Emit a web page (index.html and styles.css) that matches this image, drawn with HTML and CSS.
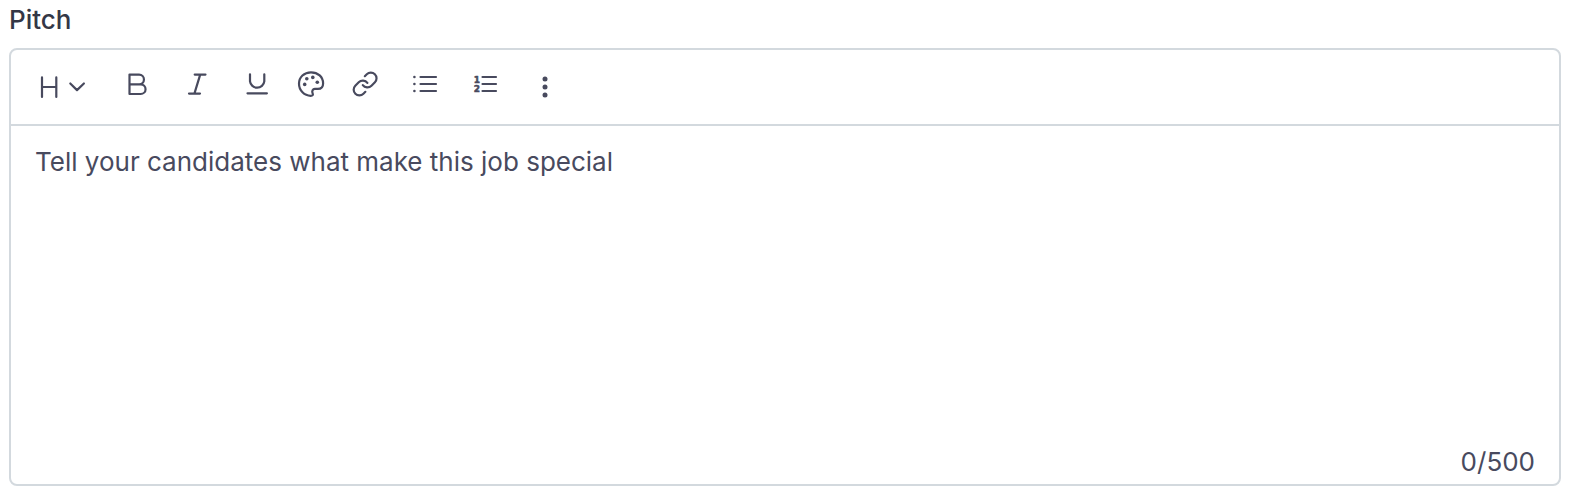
FILE: index.html
```html
<!DOCTYPE html>
<html lang="en">
<head>
<meta charset="utf-8">
<title>Pitch</title>
<link rel="stylesheet" href="styles.css">
</head>
<body>
<main class="field">
  <div class="label">Pitch</div>
  <section class="editor">
    <div class="toolbar">
      <svg class="icon heading" viewBox="0 0 54 32" role="img" aria-label="Heading"><path d="M5 6.400v19.600M19.300 6.400v19.600M5 16H19.300M33.300 12.500l6.700 6.600 6.900-6.600"/></svg>
      <svg class="icon bold" viewBox="0 0 32 32" role="img" aria-label="Bold"><path d="M7.500 3.600h9.600a4.800 4.800 0 0 1 0 9.700H7.500zM7.500 13.300h11.200a4.850 4.850 0 0 1 0 9.700H7.500z"/></svg>
      <svg class="icon italic" viewBox="0 0 32 32" role="img" aria-label="Italic"><path d="M12.700 3.600h10.800M7 22.600h11M18.200 3.600l-5.800 19"/></svg>
      <svg class="icon underline" viewBox="0 0 32 32" role="img" aria-label="Underline"><path d="M8 3.300v7a7.200 7.200 0 0 0 14.300 0v-7M5.500 22.300h19.400"/></svg>
      <svg class="icon palette" viewBox="0 0 32 32" role="img" aria-label="Color"><path d="M16 1.300C9.200 1.300 4 6.100 4 12.800S9.400 24.800 15.700 24.800c2 0 2.700-.9 1.900-2.500-1-2 .2-4.400 2.200-4.400h3.100c3.300 0 5.200-2.200 5.200-5.500C28.100 5.900 23 1.300 16 1.300z"/><g class="solid"><circle cx="9.700" cy="13.400" r="1.800"/><circle cx="11.800" cy="7.800" r="1.800"/><circle cx="17.800" cy="6.400" r="1.800"/><circle cx="22.300" cy="11.200" r="1.800"/></g></svg>
      <svg class="icon link" viewBox="0 0 32 32" role="img" aria-label="Link"><g transform="translate(16.100 13) scale(1.150) translate(-12 -12)"><path d="M10 13a5 5 0 0 0 7.540.540l3-3a5 5 0 0 0-7.070-7.070l-1.720 1.710"/><path d="M14 11a5 5 0 0 0-7.540-.540l-3 3a5 5 0 0 0 7.070 7.070l1.710-1.710"/></g></svg>
      <svg class="icon bullets" viewBox="0 0 32 32" role="img" aria-label="Bulleted list"><path d="M11.500 6H27M11.500 13H27M11.500 20H27"/><g class="solid"><circle cx="5.400" cy="6" r="1.300"/><circle cx="5.400" cy="13" r="1.300"/><circle cx="5.400" cy="20" r="1.300"/></g></svg>
      <svg class="icon numbers" viewBox="0 0 32 32" role="img" aria-label="Numbered list"><path d="M12.500 6H26M12.500 13H26M12.500 20H26"/><text x="3.800" y="11.600">1</text><text x="3.800" y="21.400">2</text></svg>
      <svg class="icon more" viewBox="0 0 32 32" role="img" aria-label="More"><g class="solid"><circle cx="16" cy="8" r="2.500"/><circle cx="16" cy="16" r="2.500"/><circle cx="16" cy="24" r="2.500"/></g></svg>
    </div>
    <div class="content">Tell your candidates what make this job special</div>
    <div class="counter">0/500</div>
  </section>
</main>
</body>
</html>
```
FILE: styles.css
```css
* {
  box-sizing: border-box;
}

body {
  margin: 0;
  background: #fff;
  color: #484a5e;
  font-family: Inter, "Liberation Sans", sans-serif;
  font-size: 26px;
  line-height: 32px;
}

.field {
  width: 1576px;
  height: 502px;
  padding: 4px 15px 16px 9px;
  display: flex;
  flex-direction: column;
}

.label {
  height: 44px;
  color: #343746;
  font-weight: 500;
}

.editor {
  flex: 1;
  display: flex;
  flex-direction: column;
  border: 2px solid #d3d9de;
  border-radius: 8px;
}

.toolbar {
  height: 76px;
  flex: none;
  display: flex;
  align-items: center;
  padding-left: 26px;
  border-bottom: 2px solid #d3d9de;
}

.icon {
  width: 32px;
  height: 32px;
  flex: none;
  fill: none;
  stroke: #484a5e;
  stroke-width: 2.2;
  stroke-linecap: round;
  stroke-linejoin: round;
}

.icon .solid,
.icon text {
  fill: #484a5e;
  stroke: none;
}

.icon text {
  font: bold 9px "DejaVu Sans", sans-serif;
  stroke: #484a5e;
  stroke-width: 0.5;
}

.heading {
  width: 54px;
}

.bold {
  margin-left: 31px;
}

.italic,
.underline,
.bullets {
  margin-left: 28px;
}

.palette {
  margin-left: 21px;
}

.link {
  margin-left: 22px;
  stroke-width: 1.9;
}

.numbers {
  margin-left: 29px;
}

.more {
  margin-left: 27px;
}

.content {
  flex: 1;
  padding: 20px 24px;
}

.counter {
  padding: 0 24px 6px;
  text-align: right;
}
```
